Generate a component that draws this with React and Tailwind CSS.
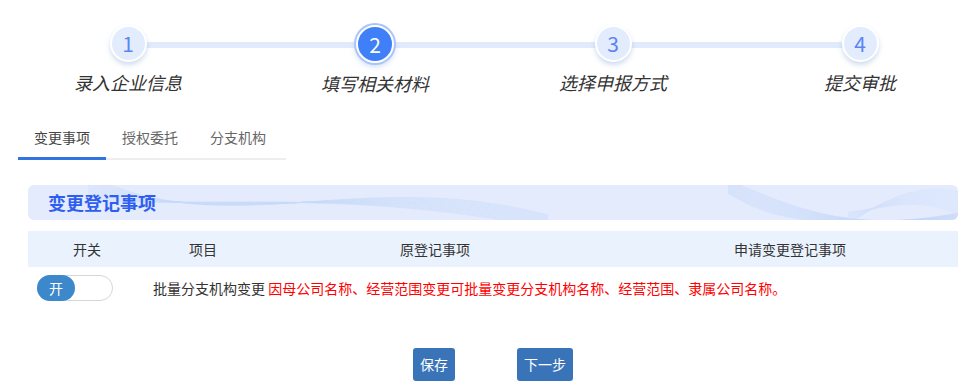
const steps = ["录入企业信息", "填写相关材料", "选择申报方式", "提交审批"];
const stepGaps = ["", "ml-[127px]", "ml-[118px]", "ml-[127px]"];
const tabs = ["变更事项", "授权委托", "分支机构"];

function Waves() {
  const lines = [];
  for (let i = 0; i < 14; i++) {
    lines.push(
      <path
        key={"a" + i}
        d={`M60 ${-10 + i * 2} C 200 ${60 - i * 3}, 330 ${-20 + i * 2}, 520 ${30 + i}`}
        stroke="#c9daf9"
        strokeWidth="0.5"
        fill="none"
      />
    );
    lines.push(
      <path
        key={"b" + i}
        d={`M700 ${-5 + i} C 760 ${20 + i * 2}, 820 ${50 - i}, 930 ${28 + i * 0.5}`}
        stroke="#c6d8f8"
        strokeWidth="0.5"
        fill="none"
      />
    );
    lines.push(
      <path
        key={"c" + i}
        d={`M820 ${40 - i} C 860 ${10 + i}, 900 ${-5 + i}, 940 ${10 + i * 2}`}
        stroke="#d2e1fa"
        strokeWidth="0.5"
        fill="none"
      />
    );
  }
  return (
    <svg className="absolute inset-0 h-full w-full" viewBox="0 0 930 35" preserveAspectRatio="none">
      {lines}
    </svg>
  );
}

export default function App() {
  return (
    <div
      className="w-[977px] h-[387px] bg-white text-[#333] overflow-hidden"
      style={{ fontFamily: '"Noto Sans CJK SC", "Noto Sans", sans-serif' }}
    >
      {/* steps */}
      <div className="relative ml-[68px] w-[852px] pt-[25px]">
        <div className="absolute left-[60px] right-[60px] top-[42px] h-[6px] bg-[#e1ebfc]" />
        <div className="relative flex">
          {steps.map((s, i) => (
            <div key={s} className={"w-[120px] flex flex-col items-center " + stepGaps[i]}>
              {i === 1 ? (
                <div className="w-[38px] h-[38px] rounded-full bg-[#3f7ff8] border-2 border-white ring-2 ring-[#a9c4fb] shadow-[0_3px_6px_rgba(80,130,230,0.35)] flex items-center justify-center text-white text-[21px] leading-none">
                  {i + 1}
                </div>
              ) : (
                <div className="w-[37px] h-[37px] rounded-full bg-[#e3ecfd] border-2 border-white shadow-[0_3px_5px_rgba(100,140,200,0.3)] flex items-center justify-center text-[#5a86f3] text-[21px] leading-none">
                  {i + 1}
                </div>
              )}
              <div className="mt-[9px] text-[18px] leading-[22px] italic text-[#333] whitespace-nowrap">
                {s}
              </div>
            </div>
          ))}
        </div>
      </div>

      {/* tabs */}
      <div className="mt-[27px] ml-[18px] w-[268px] flex border-b-2 border-[#eeeeee] text-[14px]">
        {tabs.map((t, i) => (
          <div
            key={t}
            className={
              i === 0
                ? "w-[88px] pt-[6px] pb-[9px] text-center text-[#444] border-b-[3px] border-[#2f74e0] -mb-[2px]"
                : "px-[16px] pt-[6px] pb-[9px] text-center text-[#666]"
            }
          >
            {t}
          </div>
        ))}
      </div>

      {/* section */}
      <div className="mt-[25px] mx-[28px] w-[930px]">
        <div className="relative h-[35px] rounded-[6px] bg-[#e3ebfd] overflow-hidden flex items-center">
          <Waves />
          <div className="relative pl-[20px] text-[18px] font-bold text-[#2e5ef0]">变更登记事项</div>
        </div>

        <div className="mt-[11px] h-[36px] bg-[#eaf2fe] grid grid-cols-[118px_114px_350px_1fr] items-center text-[14px] text-[#333]">
          <div className="text-center">开关</div>
          <div className="text-center">项目</div>
          <div className="text-center">原登记事项</div>
          <div className="text-center pl-[12px]">申请变更登记事项</div>
        </div>

        <div className="h-[42px] flex items-center text-[14px]">
          <div className="w-[118px] pl-[9px]">
            <div className="w-[76px] h-[26px] rounded-full border border-[#d6d6d6] bg-white flex">
              <div className="w-[38px] rounded-full bg-[#3d87cc] text-white text-[14px] flex items-center justify-center -ml-px -mt-px h-[26px]">
                开
              </div>
            </div>
          </div>
          <div className="pl-[7px] whitespace-nowrap">
            <span className="text-[#333]">批量分支机构变更 </span>
            <span className="text-[#ff0000]">
              因母公司名称、经营范围变更可批量变更分支机构名称、经营范围、隶属公司名称。
            </span>
          </div>
        </div>
      </div>

      {/* buttons */}
      <div className="mt-[39px] flex justify-center gap-[62px] pl-[9px]">
        <button className="w-[42px] h-[33px] rounded-[3px] bg-[#3a74b8] text-white text-[14px]">保存</button>
        <button className="w-[56px] h-[33px] rounded-[3px] bg-[#3a74b8] text-white text-[14px]">下一步</button>
      </div>
    </div>
  );
}
